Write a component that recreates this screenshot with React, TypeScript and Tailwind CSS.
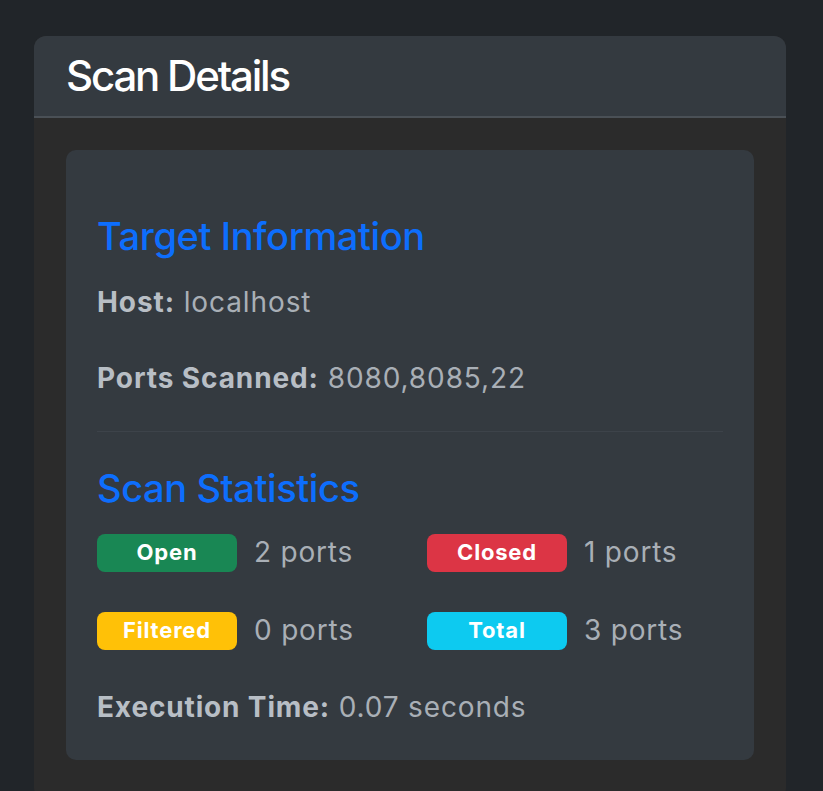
import React from "react";

const font = { fontFamily: "Inter, 'Noto Sans', sans-serif" };

function Stat({ label, cls, value }: { label: string; cls: string; value: string }) {
  return (
    <div className="flex items-center">
      <span
        className={`w-[140px] h-[38px] rounded-[8px] flex items-center justify-center text-[22px] tracking-[0.8px] font-bold text-white ${cls}`}
      >
        {label}
      </span>
      <span className="ml-[17px] text-[28px] leading-[39px] tracking-[0.8px] text-[#a9afb6]">{value}</span>
    </div>
  );
}

export default function App() {
  return (
    <div className="min-h-screen bg-[#212529] pt-[36px] pl-[34px] overflow-hidden" style={font}>
      <div className="w-[752px] rounded-[12px] overflow-hidden bg-[#2b2b2b]">
        <div className="h-[82px] bg-[#343a40] border-b-2 border-[#4a5056] px-[32px] flex items-center">
          <h3 className="text-[42px] font-medium tracking-[-2.2px] text-white leading-none">Scan Details</h3>
        </div>
        <div className="px-[32px] pt-[32px] pb-[40px]">
          <div className="bg-[#343a40] rounded-[10px] px-[31px] pt-[63px] pb-[33px]">
            <h4 className="text-[38px] leading-[47px] tracking-[-0.4px] font-medium text-[#0d6efd]">Target Information</h4>
            <p className="mt-[23px] text-[28px] leading-[39px] tracking-[0.9px] text-[#a9afb6]">
              <span className="font-bold text-[#b8bec5]">Host:</span> localhost
            </p>
            <p className="mt-[37px] text-[28px] leading-[39px] tracking-[0.9px] text-[#a9afb6]">
              <span className="font-bold text-[#b8bec5]">Ports Scanned:</span> 8080,8085,22
            </p>
            <hr className="mt-[33px] border-0 border-t border-[#3d434a]" />
            <h4 className="mt-[33px] text-[38px] leading-[47px] tracking-[-0.4px] font-medium text-[#0d6efd]">Scan Statistics</h4>
            <div className="mt-[21px] grid grid-cols-[330px_1fr] gap-y-[39px]">
              <Stat label="Open" cls="bg-[#198754]" value="2 ports" />
              <Stat label="Closed" cls="bg-[#dc3545]" value="1 ports" />
              <Stat label="Filtered" cls="bg-[#ffc107]" value="0 ports" />
              <Stat label="Total" cls="bg-[#0dcaf0]" value="3 ports" />
            </div>
            <p className="mt-[38px] text-[28px] leading-[39px] tracking-[0.85px] text-[#a9afb6]">
              <span className="font-bold text-[#b8bec5]">Execution Time:</span> 0.07 seconds
            </p>
          </div>
        </div>
      </div>
    </div>
  );
}
